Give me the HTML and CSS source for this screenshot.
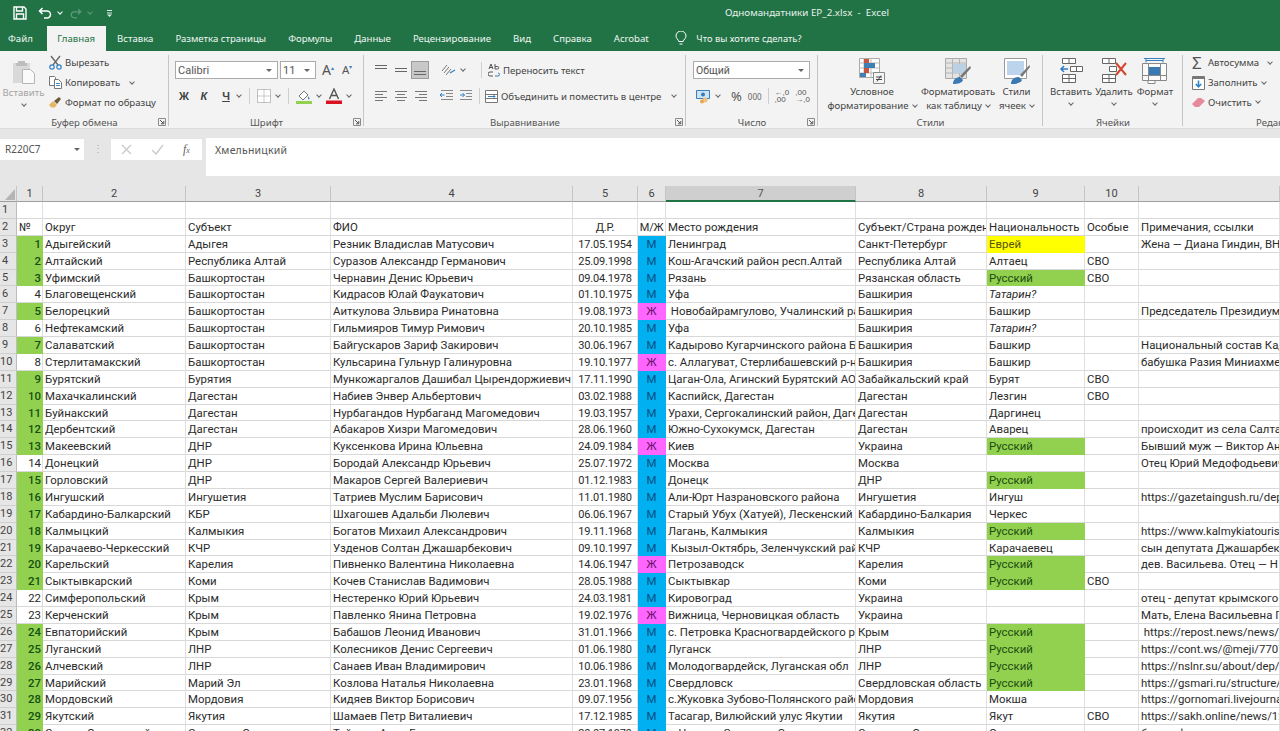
FILE: index.html
```html
<!DOCTYPE html>
<html lang="ru">
<head>
    <meta charset="UTF-8">
    <title>Одномандатники ЕР_2.xlsx - Excel</title>
    <link rel="stylesheet" href="styles.css">
</head>
<body>
<svg class="sprite" xmlns="http://www.w3.org/2000/svg">
    <symbol id="launch" viewBox="0 0 8 8"><path d="M.5 .5h7v7h-7z" fill="none" stroke="#8a8a8a"/><path d="M2 2l3.500 3.500M5.800 3v2.800H3" fill="none" stroke="#555"/></symbol>
    <symbol id="al-top" viewBox="0 0 14 14"><path d="M1 2.500h12M1 5.500h12" stroke="#666" fill="none"/></symbol>
    <symbol id="al-mid" viewBox="0 0 14 14"><path d="M1 5.500h12M1 8.500h12" stroke="#666" fill="none"/></symbol>
    <symbol id="al-bot" viewBox="0 0 14 14"><path d="M1 8.500h12M1 11.500h12" stroke="#666" fill="none"/></symbol>
    <symbol id="al-left" viewBox="0 0 14 14"><path d="M1 2.500h12M1 5.500h8M1 8.500h12M1 11.500h8" stroke="#777" fill="none"/></symbol>
    <symbol id="al-center" viewBox="0 0 14 14"><path d="M1 2.500h12M3 5.500h8M1 8.500h12M3 11.500h8" stroke="#777" fill="none"/></symbol>
    <symbol id="al-right" viewBox="0 0 14 14"><path d="M1 2.500h12M5 5.500h8M1 8.500h12M5 11.500h8" stroke="#777" fill="none"/></symbol>
</svg>

<header class="titlebar">
    <div class="qat">
        <svg class="qat-save" width="14" height="14" viewBox="0 0 14 14"><path d="M1 1h10l2 2v10H1z M3.500 1.500v3.500h6v-3.500 M3.500 13V8h7v5" fill="none" stroke="#fff" stroke-width="1.400"/></svg>
        <svg class="qat-undo" width="14" height="12" viewBox="0 0 14 12"><path d="M4.500 1L1.500 4l3 3M2 4h7a3.500 3.500 0 0 1 0 7H6" fill="none" stroke="#fff" stroke-width="1.500"/></svg>
        <i class="chev chev-light"></i>
        <svg class="qat-redo" width="12" height="11" viewBox="0 0 14 12"><path d="M9.500 1l3 3-3 3M12 4H5a3.500 3.500 0 0 0 0 7h3" fill="none" stroke="#5f9a7c" stroke-width="1.500"/></svg>
        <i class="chev chev-dim"></i>
        <svg class="qat-more" width="7" height="8" viewBox="0 0 7 8"><path d="M1 1.500h5M1 4h5" stroke="#dfeee6"/><path d="M1 5.500h5L3.500 8z" fill="#dfeee6"/></svg>
    </div>
    <div class="doc-title">Одномандатники ЕР_2.xlsx &nbsp;-&nbsp; Excel</div>
</header>

<nav class="tabs">
    <span class="tab tab-file">Файл</span>
    <span class="tab tab-active">Главная</span>
    <span class="tab">Вставка</span>
    <span class="tab">Разметка страницы</span>
    <span class="tab">Формулы</span>
    <span class="tab">Данные</span>
    <span class="tab">Рецензирование</span>
    <span class="tab">Вид</span>
    <span class="tab">Справка</span>
    <span class="tab">Acrobat</span>
    <span class="tell">
        <svg width="12" height="15" viewBox="0 0 12 15"><path d="M3.800 10.500C3.500 8.500 1 7.500 1 5a5 5 0 0 1 10 0c0 2.500-2.500 3.500-2.800 5.500zM4.500 13h3" fill="none" stroke="#fff"/></svg>
        Что вы хотите сделать?
    </span>
</nav>

<section class="ribbon">
    <div class="group g-clip">
        <div class="group-body">
            <div class="bigbtn paste-btn">
                <svg width="26" height="26" viewBox="0 0 26 26"><path d="M2 4h17v20H2z" fill="#d9d9d9"/><path d="M7 4V2h7v2h2v3H5V4z" fill="#bdbdbd"/><path d="M11.500 10.500h8l4 4v10h-12z" fill="#fafafa" stroke="#b5b5b5"/></svg>
                <span class="muted">Вставить</span>
                <i class="chev chev-big"></i>
            </div>
            <ul class="cmds">
                <li><svg width="13" height="15" viewBox="0 0 13 15"><path d="M2 1l7 9M11 1L4 10" stroke="#666" stroke-width="1.300" fill="none"/><circle cx="3" cy="12" r="2.200" fill="none" stroke="#2f7ec4" stroke-width="1.200"/><circle cx="10" cy="12" r="2.200" fill="none" stroke="#2f7ec4" stroke-width="1.200"/></svg>Вырезать</li>
                <li><svg width="13" height="13" viewBox="0 0 13 13"><path d="M.5 .5h5l1 1v8h-6z" fill="#fff" stroke="#777"/><path d="M5.500 3.500h4l3 3v6h-7z" fill="#fff" stroke="#777"/><path d="M7 7.500h4M7 9.500h4" stroke="#4a8ac4"/></svg>Копировать<i class="chev chev-copy"></i></li>
                <li><svg width="13" height="13" viewBox="0 0 13 13"><path d="M0 9l4-4 4 4-3 3-1-1-1 1-1-1z" fill="#e6b664"/><path d="M5 5l5-4 2 2-4 5z" fill="#6d5a3c"/></svg>Формат по образцу</li>
            </ul>
        </div>
        <div class="group-label">Буфер обмена</div>
        <svg class="launcher"><use href="#launch"/></svg>
    </div>

    <div class="group g-font">
        <div class="group-body stack">
            <div class="line">
                <span class="combo combo-font">Calibri<i class="tri"></i></span>
                <span class="combo combo-size">11<i class="tri"></i></span>
                <span class="grow-a">A<sup>▴</sup></span>
                <span class="grow-a small-a">A<sup>▾</sup></span>
            </div>
            <div class="line font-line">
                <b class="fmt">Ж</b>
                <b class="fmt fmt-i">К</b>
                <b class="fmt fmt-u">Ч</b><i class="chev"></i>
                <i class="vsep"></i>
                <svg width="14" height="14" viewBox="0 0 14 14"><path d="M.5 .5h13v13H.5z" fill="#fff" stroke="#888" stroke-dasharray="1 1"/><path d="M7 .5v13M.5 7h13" stroke="#999" stroke-dasharray="1 1"/></svg><i class="chev"></i>
                <i class="vsep"></i>
                <svg width="16" height="16" viewBox="0 0 16 16"><path d="M3 8l5-5 4 4-5 5z" fill="#fff" stroke="#777"/><path d="M12 8c1 1.500 2 2 1.500 3s-2 .5-1.500-3z" fill="#3f87c7"/><path d="M0 13h16v3H0z" fill="#92d050"/></svg><i class="chev"></i>
                <svg class="font-color" width="16" height="16" viewBox="0 0 16 16"><path d="M3.500 11L8 1l4.500 10M5.200 7.500h5.600" fill="none" stroke="#555" stroke-width="1.400"/><path d="M0 12.500h16V16H0z" fill="#d9121f"/></svg><i class="chev"></i>
            </div>
        </div>
        <div class="group-label">Шрифт</div>
        <svg class="launcher"><use href="#launch"/></svg>
    </div>

    <div class="group g-align">
        <div class="group-body stack">
            <div class="line">
                <svg class="ai" width="14" height="14"><use href="#al-top"/></svg>
                <svg class="ai" width="14" height="14"><use href="#al-mid"/></svg>
                <span class="selected"><svg width="14" height="14"><use href="#al-bot"/></svg></span>
                <svg class="orient" width="15" height="14" viewBox="0 0 15 14"><path d="M1 8l5-6M3 10l5-6M5 12l5-6" stroke="#777" fill="none"/><path d="M9 10l5-3" stroke="#3a7fbd" stroke-width="1.300"/></svg><i class="chev"></i>
                <i class="vsep vsep-wrap"></i>
                <svg class="wrap-ic" width="12" height="15" viewBox="0 0 12 15"><path d="M1 6l2-5 2 5M1.800 4.500h2.400M7 1v5M7 3.500h2.500a1 1 0 0 1 0 2.500H7M5 9H2a2 2 0 0 0 0 4h1M5 13H3" fill="none" stroke="#555"/><path d="M7 13h3a1.500 1.500 0 0 0 0-3" fill="none" stroke="#3a7fbd"/></svg>
                <span class="ltext">Переносить текст</span>
            </div>
            <div class="line">
                <svg class="ai" width="14" height="14"><use href="#al-left"/></svg>
                <svg class="ai" width="14" height="14"><use href="#al-center"/></svg>
                <svg class="ai ai-right" width="14" height="14"><use href="#al-right"/></svg>
                <svg class="ind ind-first" width="13" height="12" viewBox="0 0 13 12"><path d="M1 .5h12M6 3.500h7M6 6.500h7M1 9.500h12" stroke="#888"/><path d="M4.500 5H0M2 3L0 5l2 2" stroke="#2f7ec4" fill="none"/></svg>
                <svg class="ind" width="13" height="12" viewBox="0 0 13 12"><path d="M0 .5h12M6 3.500h6M6 6.500h6M0 9.500h12" stroke="#888"/><path d="M0 5h4.500M2.500 3l2 2-2 2" stroke="#2f7ec4" fill="none"/></svg>
                <i class="vsep vsep-merge"></i>
                <svg class="wrap-ic merge-ic" width="13" height="13" viewBox="0 0 13 13"><path d="M.5 .5h12v12H.5zM.5 4.500h12M.5 8.500h12" fill="#fff" stroke="#777"/><path d="M3 6.500h7M8.500 5l1.500 1.500L8.500 8" stroke="#3a7fbd" fill="none"/></svg>
                <span class="ltext">Объединить и поместить в центре</span><i class="chev chev-merge"></i>
            </div>
        </div>
        <div class="group-label">Выравнивание</div>
        <svg class="launcher"><use href="#launch"/></svg>
    </div>

    <div class="group g-num">
        <div class="group-body stack">
            <div class="line"><span class="combo combo-num">Общий<i class="tri"></i></span></div>
            <div class="line num-line">
                <svg width="15" height="15" viewBox="0 0 15 15"><path d="M.5 1.500h13v8H.5z" fill="#cfe3f3" stroke="#3a7fbd"/><circle cx="7" cy="5.500" r="2" fill="#2f7ec4"/><circle cx="9" cy="11" r="2.500" fill="#f0c27a"/><circle cx="6" cy="12.500" r="2" fill="#e8a94f"/></svg><i class="chev"></i>
                <span class="pct">%</span>
                <span class="thou">000</span>
                <i class="vsep"></i>
                <span class="dec">←,0<br>,00</span>
                <span class="dec">,00<br>→,0</span>
            </div>
        </div>
        <div class="group-label">Число</div>
        <svg class="launcher"><use href="#launch"/></svg>
    </div>

    <div class="group g-styles">
        <div class="group-body bigrow">
            <div class="bigbtn w-cond">
                <svg width="26" height="26" viewBox="0 0 26 26"><path d="M.5 .5h20v19H.5z" fill="#fff" stroke="#aaa"/><path d="M5 .5v19M12 .5v19M.5 5h20M.5 10h20M.5 15h20" stroke="#bbb"/><path d="M5 1h5v4H5zM5 10h5v5H5z" fill="#c8563c"/><path d="M5 5h11v5H5zM1 15h6v4H1z" fill="#3f7fb5"/><path d="M14.500 14.500h11v11h-11z" fill="#f6f6f6" stroke="#888"/><path d="M17 19h6M17 21.500h6M22 17.500l-4 6" stroke="#444" fill="none"/></svg>
                <span>Условное</span>
                <span>форматирование<i class="chev chev-in"></i></span>
            </div>
            <div class="bigbtn w-table">
                <svg width="26" height="26" viewBox="0 0 26 26"><path d="M.5 .5h21v20H.5z" fill="#e4e4e4" stroke="#aaa"/><path d="M7.500 .5v20M14.500 .5v20M.5 5h21M.5 10h21M.5 15h21" stroke="#b5b5b5"/><path d="M8 6h13v9H8z" fill="#bcd0e4"/><path d="M25 8L15 18l2 2L26 10z" fill="#777"/><path d="M8 26c0-5 4-7 7-7l3 3c-1 3-5 4-10 4z" fill="#3a79b2"/></svg>
                <span>Форматировать</span>
                <span>как таблицу<i class="chev chev-in"></i></span>
            </div>
            <div class="bigbtn w-cell">
                <svg width="26" height="26" viewBox="0 0 26 26"><path d="M.5 .5h22v20H.5z" fill="#fff" stroke="#999"/><path d="M3 3h17v14H3z" fill="#bcd5ec"/><path d="M25.500 7L16 17l2 2L26 9z" fill="#777"/><path d="M7 26c0-5 4-7 8-7l3 3c-1 3-6 4-11 4z" fill="#3a79b2"/></svg>
                <span>Стили</span>
                <span>ячеек<i class="chev chev-in"></i></span>
            </div>
        </div>
        <div class="group-label">Стили</div>
    </div>

    <div class="group g-cells">
        <div class="group-body bigrow">
            <div class="bigbtn w-ins">
                <svg width="26" height="26" viewBox="0 0 26 26"><path d="M4.500 .5h13v5h-13zM11 .5v5M4.500 16.500h13v8h-13zM11 16.500v8M4.500 20.500h13M12.500 8.500h12v5h-12zM18.500 8.500v5" fill="#fff" stroke="#666"/><path d="M10 11H3M6 8l-3 3 3 3" fill="none" stroke="#2f7ec4" stroke-width="1.500"/></svg>
                <span>Вставить</span><i class="chev chev-big"></i>
            </div>
            <div class="bigbtn w-del">
                <svg width="26" height="26" viewBox="0 0 26 26"><path d="M1.500 .5h13v5h-13zM8 .5v5M1.500 16.500h13v8h-13zM8 16.500v8M1.500 20.500h13M8.500 8.500h7v5h-7z" fill="#fff" stroke="#666"/><path d="M15 5l10 12M25 5L15 17" stroke="#d4452f" stroke-width="2"/></svg>
                <span>Удалить</span><i class="chev chev-big"></i>
            </div>
            <div class="bigbtn w-fmt">
                <svg width="26" height="26" viewBox="0 0 26 26"><path d="M2 .5h21M4 2.500h17M4 .5v4M21 .5v4" stroke="#3a7fbd" fill="none"/><path d="M.5 5.500h24v17H.5zM6.500 5.500v17M18.500 5.500v17M.5 17.500h24" fill="#fafafa" stroke="#888"/><path d="M7 9h11v8H7z" fill="#3a79b2"/><path d="M6 22.500h7v3H6z" fill="#fff" stroke="#888"/></svg>
                <span>Формат</span><i class="chev chev-big"></i>
            </div>
        </div>
        <div class="group-label">Ячейки</div>
    </div>

    <div class="group g-edit">
        <div class="group-body">
            <ul class="cmds">
                <li><b class="sigma">Σ</b>Автосумма<i class="chev chev-sum"></i></li>
                <li><svg width="13" height="14" viewBox="0 0 13 14"><path d="M.5 .5h12v13H.5z" fill="#fff" stroke="#777"/><path d="M1 1h11v2H1z" fill="#777"/><path d="M6.500 4.500v6M3.800 8l2.700 2.800L9.200 8" stroke="#2f7ec4" stroke-width="1.500" fill="none"/></svg>Заполнить<i class="chev chev-in"></i></li>
                <li><svg width="13" height="11" viewBox="0 0 13 11"><path d="M0 7l6-6h3l4 3-6 6H3z" fill="#e58a9c"/></svg>Очистить<i class="chev chev-in"></i></li>
            </ul>
        </div>
        <div class="group-label label-edit">Редактирование</div>
    </div>
</section>

<div class="ribbon-gap"></div>

<section class="formula">
    <div class="namebox">R220C7<i class="tri"></i></div>
    <span class="grip">⋮</span>
    <div class="fx-btns">
        <svg width="11" height="11" viewBox="0 0 11 11"><path d="M1 1l9 9M10 1l-9 9" stroke="#c9c9c9" stroke-width="1.300"/></svg>
        <svg width="13" height="11" viewBox="0 0 13 11"><path d="M1 6l4 4 7-9" stroke="#c9c9c9" stroke-width="1.300" fill="none"/></svg>
        <em class="fx">f<small>x</small></em>
    </div>
    <div class="formula-input">Хмельницкий</div>
</section>

<main class="sheet">
    <div class="row colhead">
        <span class="corner"><svg width="10" height="11" viewBox="0 0 10 11"><path d="M10 0v11H0z" fill="#b5b5b5"/></svg></span>
        <span>1</span><span>2</span><span>3</span><span>4</span><span>5</span><span>6</span><span class="col-sel">7</span><span>8</span><span>9</span><span>10</span><span></span>
    </div>
    <div class="row"><span class="rh">1</span><span></span><span></span><span></span><span></span><span></span><span></span><span></span><span></span><span></span><span></span><span></span></div>
    <div class="row"><span class="rh">2</span><span>№</span><span>Округ</span><span>Субъект</span><span>ФИО</span><span class="ctr">Д.Р.</span><span class="ctr">М/Ж</span><span>Место рождения</span><span>Субъект/Страна рождения</span><span>Национальность</span><span>Особые</span><span>Примечания, ссылки</span></div>
    <div class="row"><span class="rh">3</span><span class="n on">1</span><span>Адыгейский</span><span>Адыгея</span><span>Резник Владислав Матусович</span><span class="ctr">17.05.1954</span><span class="m">М</span><span>Ленинград</span><span>Санкт-Петербург</span><span class="yel">Еврей</span><span></span><span>Жена — Диана Гиндин, ВН</span></div>
    <div class="row"><span class="rh">4</span><span class="n on">2</span><span>Алтайский</span><span>Республика Алтай</span><span>Суразов Александр Германович</span><span class="ctr">25.09.1998</span><span class="m">М</span><span>Кош-Агачский район респ.Алтай</span><span>Республика Алтай</span><span>Алтаец</span><span>СВО</span><span></span></div>
    <div class="row"><span class="rh">5</span><span class="n on">3</span><span>Уфимский</span><span>Башкортостан</span><span>Чернавин Денис Юрьевич</span><span class="ctr">09.04.1978</span><span class="m">М</span><span>Рязань</span><span>Рязанская область</span><span class="grn">Русский</span><span>СВО</span><span></span></div>
    <div class="row"><span class="rh">6</span><span class="n">4</span><span>Благовещенский</span><span>Башкортостан</span><span>Кидрасов Юлай Фаукатович</span><span class="ctr">01.10.1975</span><span class="m">М</span><span>Уфа</span><span>Башкирия</span><span class="it">Татарин?</span><span></span><span></span></div>
    <div class="row"><span class="rh">7</span><span class="n on">5</span><span>Белорецкий</span><span>Башкортостан</span><span>Аиткулова Эльвира Ринатовна</span><span class="ctr">19.08.1973</span><span class="f">Ж</span><span>&nbsp;Новобайрамгулово, Учалинский район</span><span>Башкирия</span><span>Башкир</span><span></span><span>Председатель Президиум</span></div>
    <div class="row"><span class="rh">8</span><span class="n">6</span><span>Нефтекамский</span><span>Башкортостан</span><span>Гильмияров Тимур Римович</span><span class="ctr">20.10.1985</span><span class="m">М</span><span>Уфа</span><span>Башкирия</span><span class="it">Татарин?</span><span></span><span></span></div>
    <div class="row"><span class="rh">9</span><span class="n on">7</span><span>Салаватский</span><span>Башкортостан</span><span>Байгускаров Зариф Закирович</span><span class="ctr">30.06.1967</span><span class="m">М</span><span>Кадырово Кугарчинского района Башкирии</span><span>Башкирия</span><span>Башкир</span><span></span><span>Национальный состав Кад</span></div>
    <div class="row"><span class="rh">10</span><span class="n">8</span><span>Стерлитамакский</span><span>Башкортостан</span><span>Кульсарина Гульнур Галинуровна</span><span class="ctr">19.10.1977</span><span class="f">Ж</span><span>с. Аллагуват, Стерлибашевский р-н</span><span>Башкирия</span><span>Башкир</span><span></span><span>бабушка Разия Миниахме</span></div>
    <div class="row"><span class="rh">11</span><span class="n on">9</span><span>Бурятский</span><span>Бурятия</span><span>Мункожаргалов Дашибал Цырендоржиевич</span><span class="ctr">17.11.1990</span><span class="m">М</span><span>Цаган-Ола, Агинский Бурятский АО</span><span>Забайкальский край</span><span>Бурят</span><span>СВО</span><span></span></div>
    <div class="row"><span class="rh">12</span><span class="n on">10</span><span>Махачкалинский</span><span>Дагестан</span><span>Набиев Энвер Альбертович</span><span class="ctr">03.02.1988</span><span class="m">М</span><span>Каспийск, Дагестан</span><span>Дагестан</span><span>Лезгин</span><span>СВО</span><span></span></div>
    <div class="row"><span class="rh">13</span><span class="n on">11</span><span>Буйнакский</span><span>Дагестан</span><span>Нурбагандов Нурбаганд Магомедович</span><span class="ctr">19.03.1957</span><span class="m">М</span><span>Урахи, Сергокалинский район, Дагестан</span><span>Дагестан</span><span>Даргинец</span><span></span><span></span></div>
    <div class="row"><span class="rh">14</span><span class="n on">12</span><span>Дербентский</span><span>Дагестан</span><span>Абакаров Хизри Магомедович</span><span class="ctr">28.06.1960</span><span class="m">М</span><span>Южно-Сухокумск, Дагестан</span><span>Дагестан</span><span>Аварец</span><span></span><span>происходит из села Салта</span></div>
    <div class="row"><span class="rh">15</span><span class="n on">13</span><span>Макеевский</span><span>ДНР</span><span>Куксенкова Ирина Юльевна</span><span class="ctr">24.09.1984</span><span class="f">Ж</span><span>Киев</span><span>Украина</span><span class="grn">Русский</span><span></span><span>Бывший муж — Виктор Ан</span></div>
    <div class="row"><span class="rh">16</span><span class="n">14</span><span>Донецкий</span><span>ДНР</span><span>Бородай Александр Юрьевич</span><span class="ctr">25.07.1972</span><span class="m">М</span><span>Москва</span><span>Москва</span><span></span><span></span><span>Отец Юрий Медофодьевич</span></div>
    <div class="row"><span class="rh">17</span><span class="n on">15</span><span>Горловский</span><span>ДНР</span><span>Макаров Сергей Валериевич</span><span class="ctr">01.12.1983</span><span class="m">М</span><span>Донецк</span><span>ДНР</span><span class="grn">Русский</span><span></span><span></span></div>
    <div class="row"><span class="rh">18</span><span class="n on">16</span><span>Ингушский</span><span>Ингушетия</span><span>Татриев Муслим Барисович</span><span class="ctr">11.01.1980</span><span class="m">М</span><span>Али-Юрт Назрановского района</span><span>Ингушетия</span><span>Ингуш</span><span></span><span>https://gazetaingush.ru/dep</span></div>
    <div class="row"><span class="rh">19</span><span class="n on">17</span><span>Кабардино-Балкарский</span><span>КБР</span><span>Шхагошев Адальби Люлевич</span><span class="ctr">06.06.1967</span><span class="m">М</span><span>Старый Убух (Хатуей), Лескенский район</span><span>Кабардино-Балкария</span><span>Черкес</span><span></span><span></span></div>
    <div class="row"><span class="rh">20</span><span class="n on">18</span><span>Калмыцкий</span><span>Калмыкия</span><span>Богатов Михаил Александрович</span><span class="ctr">19.11.1968</span><span class="m">М</span><span>Лагань, Калмыкия</span><span>Калмыкия</span><span class="grn">Русский</span><span></span><span>https://www.kalmykiatourism</span></div>
    <div class="row"><span class="rh">21</span><span class="n on">19</span><span>Карачаево-Черкесский</span><span>КЧР</span><span>Узденов Солтан Джашарбекович</span><span class="ctr">09.10.1997</span><span class="m">М</span><span>&nbsp;Кызыл-Октябрь, Зеленчукский район</span><span>КЧР</span><span>Карачаевец</span><span></span><span>сын депутата Джашарбека</span></div>
    <div class="row"><span class="rh">22</span><span class="n on">20</span><span>Карельский</span><span>Карелия</span><span>Пивненко Валентина Николаевна</span><span class="ctr">14.06.1947</span><span class="f">Ж</span><span>Петрозаводск</span><span>Карелия</span><span class="grn">Русский</span><span></span><span>дев. Васильева. Отец — Н</span></div>
    <div class="row"><span class="rh">23</span><span class="n on">21</span><span>Сыктывкарский</span><span>Коми</span><span>Кочев Станислав Вадимович</span><span class="ctr">28.05.1988</span><span class="m">М</span><span>Сыктывкар</span><span>Коми</span><span class="grn">Русский</span><span>СВО</span><span></span></div>
    <div class="row"><span class="rh">24</span><span class="n">22</span><span>Симферопольский</span><span>Крым</span><span>Нестеренко Юрий Юрьевич</span><span class="ctr">24.03.1981</span><span class="m">М</span><span>Кировоград</span><span>Украина</span><span></span><span></span><span>отец - депутат крымского</span></div>
    <div class="row"><span class="rh">25</span><span class="n">23</span><span>Керченский</span><span>Крым</span><span>Павленко Янина Петровна</span><span class="ctr">19.02.1976</span><span class="f">Ж</span><span>Вижница, Черновицкая область</span><span>Украина</span><span></span><span></span><span>Мать, Елена Васильевна П</span></div>
    <div class="row"><span class="rh">26</span><span class="n on">24</span><span>Евпаторийский</span><span>Крым</span><span>Бабашов Леонид Иванович</span><span class="ctr">31.01.1966</span><span class="m">М</span><span>с. Петровка Красногвардейского района</span><span>Крым</span><span class="grn">Русский</span><span></span><span>&nbsp;https://repost.news/news/</span></div>
    <div class="row"><span class="rh">27</span><span class="n on">25</span><span>Луганский</span><span>ЛНР</span><span>Колесников Денис Сергеевич</span><span class="ctr">01.06.1980</span><span class="m">М</span><span>Луганск</span><span>ЛНР</span><span class="grn">Русский</span><span></span><span>https://cont.ws/@meji/7707</span></div>
    <div class="row"><span class="rh">28</span><span class="n on">26</span><span>Алчевский</span><span>ЛНР</span><span>Санаев Иван Владимирович</span><span class="ctr">10.06.1986</span><span class="m">М</span><span>Молодогвардейск, Луганская обл</span><span>ЛНР</span><span class="grn">Русский</span><span></span><span>https://nslnr.su/about/dep/</span></div>
    <div class="row"><span class="rh">29</span><span class="n on">27</span><span>Марийский</span><span>Марий Эл</span><span>Козлова Наталья Николаевна</span><span class="ctr">23.01.1968</span><span class="m">М</span><span>Свердловск</span><span>Свердловская область</span><span class="grn">Русский</span><span></span><span>https://gsmari.ru/structure/</span></div>
    <div class="row"><span class="rh">30</span><span class="n on">28</span><span>Мордовский</span><span>Мордовия</span><span>Кидяев Виктор Борисович</span><span class="ctr">09.07.1956</span><span class="m">М</span><span>с.Жуковка Зубово-Полянского района</span><span>Мордовия</span><span>Мокша</span><span></span><span>https://gornomari.livejournal</span></div>
    <div class="row"><span class="rh">31</span><span class="n on">29</span><span>Якутский</span><span>Якутия</span><span>Шамаев Петр Виталиевич</span><span class="ctr">17.12.1985</span><span class="m">М</span><span>Тасагар, Вилюйский улус Якутии</span><span>Якутия</span><span>Якут</span><span>СВО</span><span>https://sakh.online/news/12</span></div>
    <div class="row"><span class="rh">32</span><span class="n on">30</span><span>Северо-Осетинский</span><span>Северная Осетия</span><span>Тайсаев Алан Борисович</span><span class="ctr">20.07.1979</span><span class="m">М</span><span>г. Чикола, Северная Осетия</span><span>Северная Осетия</span><span>Осетин</span><span></span><span>биография</span></div>
</main>
</body>
</html>
```

FILE: styles.css
```css
html, body { margin: 0; padding: 0; height: 100%; overflow: hidden; background: #e6e6e6; }
body { font-family: "Noto Sans", "Open Sans", sans-serif; font-size: 9.600px; color: #444; }
.sprite { display: none; }
ul { list-style: none; margin: 0; padding: 0; }
i { font-style: normal; }

/* title bar + tabs */
.titlebar { height: 26px; background: #217346; color: #fff; display: flex; align-items: center; }
.qat { width: 725px; display: flex; align-items: center; padding-left: 13px; box-sizing: border-box; }
.qat-undo { margin-left: 11px; }
.qat-redo { margin-left: 8px; }
.qat-more { margin-left: 14px; }
.doc-title { font-size: 9.800px; color: #e8f2ec; white-space: nowrap; margin-top: -2px; }
.chev { display: inline-block; width: 3px; height: 3px; margin: 0 0 2px 5px; border-right: 1px solid #666; border-bottom: 1px solid #666; transform: rotate(45deg); flex: none; }
.chev-light { border-color: #fff; margin-left: 6px; }
.chev-dim { border-color: #5f9a7c; margin-left: 6px; }
.tabs { height: 25px; background: #217346; color: #f0f6f2; display: flex; align-items: center; padding-left: 8px; box-sizing: border-box; }
.tab { margin-right: 22px; white-space: nowrap; font-size: 9.600px; line-height: 25px; }
.tab-file { margin-right: 14px; }
.tab-active { background: #f3f3f3; color: #217346; padding: 0 10.500px; margin-right: 11.500px; }
.tell { display: flex; align-items: center; gap: 9px; margin-left: 4.500px; white-space: nowrap; font-size: 9.400px; }

/* ribbon */
.ribbon { height: 78px; box-sizing: border-box; background: #f3f3f3; display: flex; padding-top: 2px; border-bottom: 1px solid #dcdcdc; }
.group { position: relative; display: flex; flex-direction: column; flex: none; height: 75px; box-sizing: border-box; }
.group::after { content: ""; position: absolute; right: 0; top: 2px; bottom: 2px; width: 1px; background: #c6c6c6; }
.group-body { flex: 1; display: flex; min-height: 0; }
.group-label { height: 13px; line-height: 15px; text-align: center; color: #555; white-space: nowrap; }
.launcher { position: absolute; right: 3px; bottom: 2px; width: 8px; height: 8px; }
.g-clip { width: 169px; }
.g-font { width: 195px; }
.g-align { width: 322px; }
.g-num { width: 132px; }
.g-styles { width: 225px; }
.g-cells { width: 140px; }
.g-edit { width: 97px; overflow: hidden; }
.g-edit::after { display: none; }
.label-edit { text-align: left; padding-left: 73px; }

.bigbtn { display: flex; flex-direction: column; align-items: center; padding-top: 5px; line-height: 14px; white-space: nowrap; flex: none; color: #444; }
.bigbtn svg { margin-bottom: 1px; }
.paste-btn { width: 47px; padding-top: 6px; }
.muted { color: #a3a3a3; }
.chev-big { margin: 2px 0 0 0; }
.chev-in { margin: 0 0 2px 4px; }
.chev-copy { margin-left: 10px; }
.chev-sum { margin-left: 9px; }

.cmds { padding-left: 2px; }
.cmds li { height: 19.700px; display: flex; align-items: center; white-space: nowrap; }
.cmds li svg, .cmds .sigma { width: 13px; margin-right: 3px; flex: none; }
.sigma { font-size: 17px; font-weight: 400; color: #555; line-height: 17px; }
.g-edit .cmds { padding-left: 9px; }

.stack { flex-direction: column; padding-top: 8px; gap: 8px; }
.line { height: 18px; display: flex; align-items: center; }
.combo { height: 18px; box-sizing: border-box; border: 1px solid #ababab; background: #fff; display: flex; align-items: center; padding-left: 2px; position: relative; color: #555; font-family: "Roboto", sans-serif; font-size: 11px; }
.tri { position: absolute; right: 5px; top: 7px; border-left: 3px solid transparent; border-right: 3px solid transparent; border-top: 3px solid #666; }
.combo-font { width: 103px; margin-left: 6px; }
.combo-size { width: 36px; margin-left: 2px; }
.grow-a { margin-left: 6px; font-size: 14px; color: #555; line-height: 18px; width: 14px; white-space: nowrap; }
.grow-a sup { font-size: 6px; color: #3a7fbd; vertical-align: 5px; line-height: 0; }
.small-a { font-size: 11.500px; margin-left: 6px; }
.font-line { padding-left: 9px; }
.fmt { width: 12px; font-size: 11px; text-align: center; color: #444; font-family: "Liberation Sans", sans-serif; margin-right: 10px; }
.fmt-i { font-style: italic; width: 8px; margin-right: 12px; }
.fmt-u { text-decoration: underline; margin-right: 0; }
.vsep { width: 1px; height: 16px; background: #cfcfcf; margin: 0 7px 0 8px; flex: none; }
.font-color { margin-left: 5px; }

.ai { margin-left: 6px; flex: none; }
.g-align .line > .ai:first-child { margin-left: 10px; }
.selected { width: 18px; height: 18px; box-sizing: border-box; border: 1px solid #9c9c9c; background: #c8c8c8; display: flex; align-items: center; justify-content: center; margin-left: 3px; flex: none; }
.orient { margin-left: 12px; flex: none; }
.vsep-wrap { margin: 0 6px 0 16px; }
.vsep-merge { margin: 0 5px 0 6px; }
.wrap-ic { flex: none; }
.ai-right { margin-left: 6px; }
.ind { margin-left: 7px; flex: none; }
.ind-first { margin-left: 12px; }
.ltext { margin-left: 3px; white-space: nowrap; }
.chev-merge { margin-left: 11px; }
.combo-num { width: 117px; margin-left: 7px; font-size: 10.500px; }
.num-line { padding-left: 10px; }
.pct { margin-left: 11px; font-size: 13px; color: #555; }
.thou { margin-left: 6px; font-size: 8px; color: #666; }
.num-line .vsep { margin: 0 6px 0 6px; }
.dec { font-size: 8px; line-height: 7px; color: #555; margin-right: 6px; white-space: nowrap; font-family: "Liberation Sans", sans-serif; }

.bigrow { gap: 3px; }
.g-styles .bigrow { padding-left: 8px; }
.g-cells .bigrow { padding-left: 7px; }
.w-cond { width: 92px; }
.w-table { width: 74px; }
.w-cell { width: 37px; }
.w-ins { width: 42px; }
.w-del, .w-fmt { width: 38px; }

/* formula bar */
.ribbon-gap { height: 9px; background: #e6e6e6; }
.formula { height: 38px; display: flex; align-items: flex-start; margin-bottom: 10px; }
.namebox { width: 84px; height: 21px; margin-top: 1px; box-sizing: border-box; background: #fff; padding-left: 5px; line-height: 20px; position: relative; font-size: 10px; color: #555; }
.namebox .tri { top: 9px; right: 4px; }
.grip { width: 27px; text-align: center; color: #aaa; line-height: 22px; }
.fx-btns { width: 91px; height: 21px; margin-top: 1px; background: #fff; display: flex; align-items: center; gap: 19px; padding-left: 10px; box-sizing: border-box; }
.fx { font-family: "Liberation Serif", serif; font-size: 12px; color: #666; }
.fx small { font-size: 8px; }
.formula-input { flex: 1; margin-left: 4px; height: 38px; background: #fff; padding: 5px 0 0 9px; box-sizing: border-box; font-size: 10.500px; color: #555; letter-spacing: .2px; }

/* sheet */
.sheet { background: #fff; font-family: "Roboto", "Noto Sans", sans-serif; font-size: 11.400px; color: #2b2b2b; }
.row { display: grid; grid-template-columns: 17px 26px 143px 145px 242px 65px 28px 190px 131px 98px 54px 141px; height: 16.880px; }
.row > span { overflow: hidden; white-space: nowrap; padding-left: 2px; box-sizing: border-box; border-right: 1px solid #dfdfdf; border-bottom: 1px solid #d8d8d8; line-height: 16px; }
.colhead { height: 16px; background: #e6e6e6; color: #444; }
.colhead > span { padding: 0; text-align: center; border-right: 1px solid #c4c4c4; border-bottom: 1px solid #9f9f9f; line-height: 15px; font-size: 11px; }
.colhead > span.corner { display: flex; align-items: flex-end; justify-content: flex-start; padding: 0 0 1px 5px; }
.colhead > span.col-sel { background: #cfcfcf; border-bottom: 2px solid #217346; color: #555; }
.row > span.rh { background: #e6e6e6; color: #444; padding: 0 6px 0 0; text-align: center; border-right: 1px solid #bdbdbd; border-bottom: 1px solid #cfcfcf; font-size: 11px; }
.row > span.ctr { padding: 0; text-align: center; font-size: 11px; letter-spacing: -.2px; line-height: 17px; }
.row > span.n { text-align: right; padding: 0 1px 0 0; }
.row > span.on { background: #92d050; color: #14500f; font-weight: 500; border-color: #92d050; }
.row > span.m { background: #00b0f0; color: #0a4f80; text-align: center; padding: 0; border-color: #00b0f0; }
.row > span.f { background: #ff66ff; color: #6a1470; text-align: center; padding: 0; border-color: #ff66ff; }
.row > span.grn { background: #92d050; color: #1c4c10; border-color: #92d050; }
.row > span.yel { background: #ffff00; color: #55530a; border-color: #ffff00; }
.it { font-style: italic; }
```
